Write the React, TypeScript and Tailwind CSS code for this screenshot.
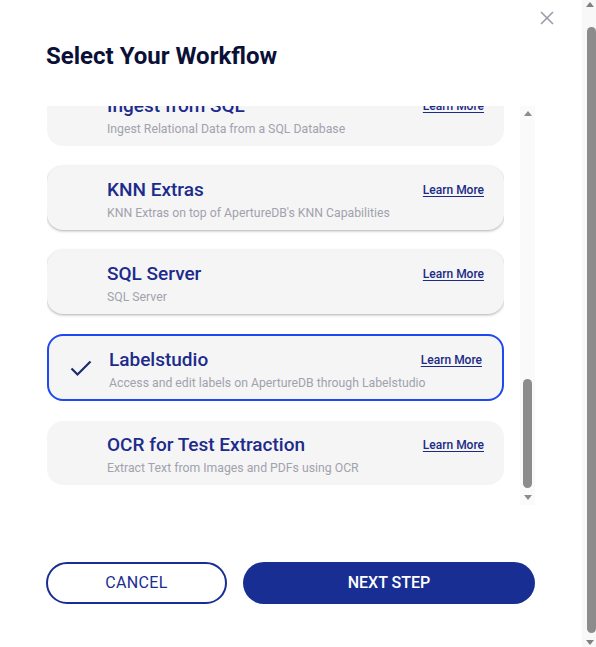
import React from "react";

type Item = { title: string; desc: string; selected?: boolean; shadow?: boolean };

const items: Item[] = [
  { title: "Ingest from SQL", desc: "Ingest Relational Data from a SQL Database" },
  { title: "KNN Extras", desc: "KNN Extras on top of ApertureDB's KNN Capabilities", shadow: true },
  { title: "SQL Server", desc: "SQL Server", shadow: true },
  { title: "Labelstudio", desc: "Access and edit labels on ApertureDB through Labelstudio", selected: true },
  { title: "OCR for Test Extraction", desc: "Extract Text from Images and PDFs using OCR" },
];

function UpArrow({ color }: { color: string }) {
  return (
    <svg width="8" height="5" viewBox="0 0 8 5" className="block">
      <polygon points="0,5 4,0 8,5" fill={color} />
    </svg>
  );
}
function DownArrow({ color }: { color: string }) {
  return (
    <svg width="8" height="5" viewBox="0 0 8 5" className="block">
      <polygon points="0,0 8,0 4,5" fill={color} />
    </svg>
  );
}

function Card({ item }: { item: Item }) {
  const base = "flex items-center rounded-[16px] bg-[#f5f5f5] shrink-0";
  const cls = item.selected
    ? `${base} h-[67px] border-2 border-[#1d48f2]`
    : `${base} h-[64px] ${item.shadow ? "shadow-[0_1px_3px_rgba(0,0,0,0.32)]" : ""}`;
  return (
    <div className={cls}>
      <div className="w-[60px] flex justify-center pl-[3px] pt-[2px]">
        {item.selected && (
          <svg width="22" height="17" viewBox="0 0 22 17" className="block">
            <polyline points="1.5,8.5 7.5,14.5 20.5,1.5" fill="none" stroke="#1c2a6e" strokeWidth="2.2" />
          </svg>
        )}
      </div>
      <div className="flex-1 flex flex-col min-w-0 pt-[4px]">
        <div className="flex items-center justify-between pr-5">
          <span className="text-[19px] leading-[22px] font-medium text-[#1c2b8c]">{item.title}</span>
          <span className="text-[12px] leading-[16px] font-medium text-[#1b2a86] underline underline-offset-[2px]">
            Learn More
          </span>
        </div>
        <div className="mt-[4px] text-[12.25px] leading-[16px] text-[#a2a2ae]">{item.desc}</div>
      </div>
    </div>
  );
}

export default function App() {
  return (
    <div className="flex w-[596px] h-[647px] bg-white overflow-hidden" style={{ fontFamily: "Roboto, 'Noto Sans', sans-serif" }}>
      <div className="flex-1 flex flex-col">
        <div className="flex justify-end pt-[11px] pr-[28px]">
          <svg width="14" height="14" viewBox="0 0 14 14" className="block">
            <line x1="1" y1="1" x2="13" y2="13" stroke="#9a9aab" strokeWidth="1.6" />
            <line x1="13" y1="1" x2="1" y2="13" stroke="#9a9aab" strokeWidth="1.6" />
          </svg>
        </div>
        <h1 className="mt-[17px] ml-[46px] text-[24px] leading-[28px] font-bold text-[#0b1036]">
          Select Your Workflow
        </h1>
        <div className="mt-[36px] ml-[47px] mr-[47px] h-[399px] flex gap-4">
          <div className="flex-1 overflow-hidden">
            <div className="flex flex-col gap-5 -mt-[24px]">
              {items.map((it) => (
                <Card key={it.title} item={it} />
              ))}
            </div>
          </div>
          <div className="w-[15px] bg-[#fafafa] flex flex-col items-center">
            <div className="mt-[5px]">
              <UpArrow color="#8c8c8c" />
            </div>
            <div className="mt-[263px] h-[109px] w-[9px] rounded-full bg-[#8c8c8c]" />
            <div className="mt-[7px]">
              <DownArrow color="#8c8c8c" />
            </div>
          </div>
        </div>
        <div className="mt-[57px] ml-[46px] mr-[47px] flex gap-4">
          <button className="w-[181px] h-[42px] rounded-full border-2 border-[#182e92] text-[#182e92] text-[16px] tracking-[0.02em] bg-white">
            CANCEL
          </button>
          <button className="flex-1 h-[42px] rounded-full bg-[#182e92] text-white text-[16px] font-medium">
            NEXT STEP
          </button>
        </div>
      </div>
      <div className="w-[14px] bg-[#f8f8f8] flex flex-col items-center">
        <div className="mt-[2px] ml-[2px]">
          <UpArrow color="#808080" />
        </div>
        <div className="mt-[20px] ml-[4px] h-[606px] w-[9px] rounded-full bg-[#8c8c8c]" />
        <div className="mt-[7px] ml-[2px]">
          <DownArrow color="#808080" />
        </div>
      </div>
    </div>
  );
}
